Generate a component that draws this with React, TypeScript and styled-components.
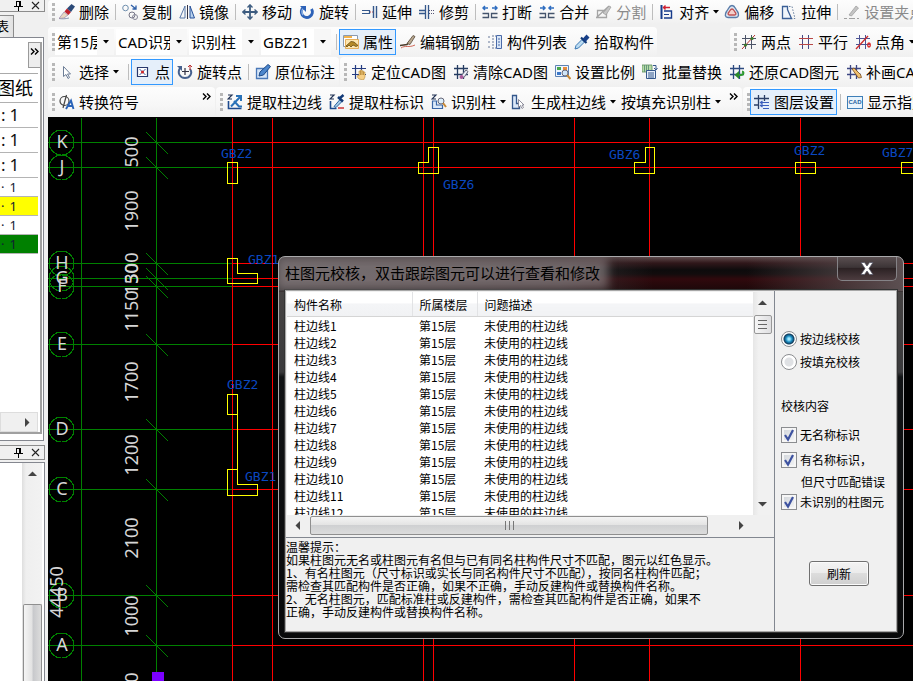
import React from "react";
import styled, { createGlobalStyle, css } from "styled-components";

const GlobalStyle = createGlobalStyle`
  * { box-sizing: border-box; }
  html, body { margin: 0; padding: 0; overflow: hidden; background: #f0f0f0; }
  button, select, input { font: inherit; color: inherit; margin: 0; }
`;

const uiFont = `"Noto Sans", "Noto Sans CJK SC", sans-serif`;
const smallFont = `"Noto Sans CJK SC", sans-serif`;

const Page = styled.div`
  display: flex;
  height: 100vh;
  overflow: hidden;
  background: #f0f0f0;
  color: #000;
  font: 15px/20px ${uiFont};
`;

/* ---------- side panels ---------- */

const Sidebar = styled.aside`
  flex: 0 0 45px;
  display: flex;
  flex-direction: column;
  overflow: hidden;
  margin-right: 3px;
`;

const PanelTitle = styled.header<{ $first?: boolean }>`
  flex: 0 0 ${(p) => (p.$first ? 12 : 15)}px;
  margin-top: ${(p) => (p.$first ? 0 : 4)}px;
  display: flex;
  align-items: center;
  justify-content: flex-end;
  gap: 8px;
  padding-right: 4px;
  border: 1px solid #8c8c8c;
  border-left: 0;
  border-top-width: ${(p) => (p.$first ? 0 : 1)}px;
`;

const TitleButton = styled.button`
  display: flex;
  padding: 0;
  border: 0;
  background: none;
`;

const TabStrip = styled.div`
  flex: 0 0 25px;
  display: flex;
  align-items: flex-end;
`;

const PanelTab = styled.button`
  width: 14px;
  height: 22px;
  padding: 0;
  border: 1px solid #8c8c8c;
  border-left: 0;
  border-bottom: 0;
  background: linear-gradient(90deg, #f0f0f0, #e2e2e2);
  display: flex;
  justify-content: flex-end;
  padding-right: 4px;
  font: 13px/20px ${smallFont};
  overflow: hidden;
`;

const ListPanel = styled.section`
  flex: 0 0 404px;
  display: flex;
  border: 1px solid #84878f;
  border-left: 0;
  background: #fff;
  padding: 4px 1px 6px 0;
  width: 44px;
`;

const ListInner = styled.div`
  flex: 1;
  display: flex;
  flex-direction: column;
  border-right: 2px solid #a0a0a0;
  border-bottom: 2px solid #a0a0a0;
  overflow: hidden;
`;

const MoreBox = styled.button`
  align-self: flex-end;
  flex: 0 0 26px;
  width: 13px;
  margin-right: -1px;
  border: 1px solid #9a9a9a;
  background: #ededed;
  padding: 5px 0 0;
  display: flex;
  justify-content: center;
`;

const ListHeader = styled.div`
  flex: 0 0 30px;
  margin-top: 5px;
  border-top: 1px solid #aaa;
  border-bottom: 1px solid #b0b0b0;
  width: 38px;
  display: flex;
  justify-content: flex-end;
  align-items: center;
  padding-right: 5px;
  white-space: nowrap;
  font-size: 18px;
`;

const ListRow = styled.div<{ $small?: boolean; $bg?: string }>`
  flex: 0 0 ${(p) => (p.$small ? 19 : 25)}px;
  line-height: 18px;
  display: flex;
  align-items: center;
  width: 38px;
  padding-left: 1px;
  border-bottom: 1px solid #b4b4b4;
  background: ${(p) => p.$bg ?? "#fff"};
  color: ${(p) => (p.$small ? "#123" : "#111")};
  font-size: ${(p) => (p.$small ? 13 : 17)}px;
  gap: ${(p) => (p.$small ? 5 : 4)}px;
`;

const HScrollStub = styled.div`
  margin-top: auto;
  flex: 0 0 20px;
  width: 38px;
  border: 1px solid #ddd;
  background: #f0f0f0;
  display: flex;
  align-items: center;
  justify-content: flex-end;
  padding-right: 5px;
`;

const LowerPanel = styled.section`
  flex: 1;
  margin-top: 2px;
  display: flex;
  justify-content: flex-end;
  background: #fff;
  border-top: 1px solid #84878f;
  border-right: 1px solid #84878f;
  padding-right: 2px;
`;

const VScrollTrack = styled.div`
  width: 20px;
  background: linear-gradient(90deg, #dedede, #efefef 20%, #f2f2f2);
  display: flex;
  flex-direction: column;
  align-items: center;
  padding-top: 6px;
  justify-content: space-between;
`;

const VThumb = styled.div`
  width: 19px;
  height: 77px;
  border: 1px solid #8f8f8f;
  border-bottom: 0;
  border-radius: 2px 2px 0 0;
  background: linear-gradient(90deg, #f5f5f5, #e3e3e3 45%, #c8c9cc 55%, #dcdcdc);
`;

/* ---------- toolbars ---------- */

const Main = styled.main`
  flex: 1;
  min-width: 0;
  display: flex;
  flex-direction: column;
`;

const ToolRow = styled.div<{ $top?: boolean }>`
  flex: 0 0 ${(p) => (p.$top ? 27 : 30)}px;
  display: flex;
  overflow: hidden;
  gap: 1px;
`;

const Strip = styled.div<{ $width?: number; $top?: boolean; $left?: number }>`
  flex: ${(p) => (p.$width ? `0 0 ${p.$width}px` : "1 0 auto")};
  margin-left: ${(p) => p.$left ?? 0}px;
  display: flex;
  align-items: center;
  height: ${(p) => (p.$top ? 24 : 30)}px;
  padding-left: 4px;
  border-radius: 4px;
  background: linear-gradient(#fdfdfd, #f7f7f7 60%, #f0f0f0);
`;

const Grip = styled.span`
  flex: 0 0 3px;
  height: 18px;
  background: repeating-linear-gradient(#b8b8b8 0 3px, transparent 3px 5px);
`;

const Tool = styled.button<{ $on?: boolean; $dim?: boolean }>`
  flex: none;
  display: flex;
  align-items: center;
  gap: 4px;
  height: 26px;
  padding: 0 2px 0 3px;
  border: 1px solid transparent;
  background: none;
  white-space: nowrap;
  ${(p) => p.$on && css`
    border-color: #3399ff;
    background: #e5effa;
  `}
  ${(p) => p.$dim && css`color: #8a8a8a;`}
`;

const MenuMark = styled.span`
  display: flex;
  margin-right: -2px;
`;

const Divider = styled.span<{ $lead?: number }>`
  flex: 0 0 1px;
  height: 16px;
  margin: 0 2px 0 ${(p) => p.$lead ?? 3}px;
  background: #bdbdbd;
`;

const ComboWrap = styled.label<{ $width: number }>`
  flex: 0 0 ${(p) => p.$width}px;
  display: grid;
  grid-template-columns: 1fr 17px;
  align-items: center;
  height: 26px;
  background: #fff;
  margin-right: 2px;
`;

const ComboSelect = styled.select`
  grid-column: 1;
  min-width: 0;
  width: 100%;
  height: 26px;
  appearance: none;
  border: 0;
  border-radius: 0;
  padding: 0 0 0 2px;
  background: #fff;
  overflow: hidden;
  white-space: nowrap;
`;

const ComboArrow = styled.span`
  display: flex;
  align-items: center;
  justify-content: center;
  height: 26px;
  background: #f7f7f7;
`;

const Overflow = styled.button`
  align-self: flex-start;
  margin: 6px 4px 0 auto;
  padding: 0;
  border: 0;
  background: none;
  display: flex;
`;

/* ---------- icons ---------- */

const Svg = ({ children, w = 16, h = 16 }: { children: React.ReactNode; w?: number; h?: number }) => (
  <svg width={w} height={h} viewBox={`0 0 ${w} ${h}`} fill="none" aria-hidden="true">
    {children}
  </svg>
);

const Down = () => (
  <Svg w={6} h={4}><path d="M0 0h6L3 3.5z" fill="#000" /></Svg>
);
const Chevrons = () => (
  <Svg w={9} h={7}><path d="M1 .5l3 3-3 3M5 .5l3 3-3 3" stroke="#000" strokeWidth="1.4" /></Svg>
);
const Pin = () => (
  <Svg w={9} h={10}>
    <path d="M2.5 0v5M2 .5h5M0 5.5h9M4.5 6v4" stroke="#000" /><path d="M5 0h2v5H5z" fill="#000" />
  </Svg>
);
const Cross = () => (
  <Svg w={9} h={9}><path d="M1 1l7 7M8 1L1 8" stroke="#222" strokeWidth="1.1" /></Svg>
);
const ArrowTri = ({ dir }: { dir: "up" | "down" | "left" | "right" }) => {
  const d = { up: "M0 7l4.500-4.500L9 7z", down: "M0 2l4.500 4.500L9 2z", left: "M7 0L2.500 4.500 7 9z", right: "M2 0l4.500 4.500L2 9z" }[dir];
  return <Svg w={9} h={9}><path d={d} fill="#444" /></Svg>;
};

const hash = "M4.500 1v14M10.500 1v14M1 4.500h14M1 10.500h14";

const icons: Record<string, React.ReactNode> = {
  erase: <><path d="M0 14.500c3 .5 6 .5 10-.5" stroke="#8a9ab0" /><path d="M5 8l4 3-4 3-5 .5z" fill="#e8d8c0" stroke="#98a" strokeWidth=".7" /><path d="M5.500 7.500l4 3.500 2.500-3-4-3.500z" fill="#c0202a" /><path d="M8 4.500L12.500 0 16 2.500 12 8z" fill="#2b4a78" /></>,
  copy: <><circle cx="3.500" cy="4" r="2.800" stroke="#6f8fae" /><circle cx="10" cy="11" r="3" stroke="#778" /><circle cx="13" cy="13" r="2.500" stroke="#889" /><path d="M9 1l5 4M14 1.500V5h-3.500" stroke="#2e5fa8" strokeWidth="1.300" /></>,
  mirror: <><path d="M6 2v12H.8z" stroke="#5878a8" /><path d="M8.500 1v14" stroke="#334" /><path d="M11 2v12h4.500z" stroke="#27509a" fill="#b8d2ee" /></>,
  move: <><path d="M8 1v14M1 8h14" stroke="#3d5c80" strokeWidth="1.800" /><path d="M5.500 3.500L8 .8l2.500 2.700M5.500 12.500L8 15.200l2.500-2.700M3.500 5.500L.8 8l2.700 2.500M12.500 5.500L15.200 8l-2.700 2.500" stroke="#3d5c80" strokeWidth="1.300" /></>,
  rotate: <><path d="M4.500 3.500A5.500 5.500 0 1 0 12.500 5" stroke="#2d62b8" strokeWidth="3" /><path d="M5 3.500A5.500 5.500 0 0 0 4 11" stroke="#8fb4e6" strokeWidth="1.500" /><path d="M1 2h6v6z" fill="#2d62b8" /></>,
  extend: <><path d="M0 6.500h7.500v3H0" stroke="#35588c" strokeWidth="1.200" /><path d="M8 8h3" stroke="#c04848" strokeDasharray="1 1" /><path d="M11.500 2v12M14.500 2v12" stroke="#35588c" strokeWidth="1.400" /></>,
  trim: <><path d="M0 6.500h6M0 9.500h6" stroke="#35588c" strokeWidth="1.300" /><path d="M6.500 1v14M9.500 1v14" stroke="#35588c" strokeWidth="1.300" /><path d="M10 6.500h6M10 9.500h6" stroke="#557" strokeDasharray="1 1" /></>,
  breaks: <><path d="M1 4h5M10 4h5M3 2L1 4l2 2M13 2l2 2-2 2" stroke="#2e6dc0" strokeWidth="1.500" /><path d="M.5 9.500h6v4h-6M15.500 9.500h-6v4h6" stroke="#44546c" strokeWidth="1.300" /></>,
  merge: <><path d="M1 4h5M10 4h5M4 2l2 2-2 2M12 2l-2 2 2 2" stroke="#2e6dc0" strokeWidth="1.500" /><path d="M.5 9.500h6v4h-6M15.500 9.500h-6v4h6" stroke="#44546c" strokeWidth="1.300" /></>,
  split: <><path d="M1.500 6.500h9v7h-9zM0 14L13 2" stroke="#a5a5a5" strokeWidth="1.300" /><path d="M7 9l6-7 2 1-5 8z" fill="#c6c6c6" stroke="#999" strokeWidth=".7" /></>,
  align: <><path d="M2.500 1v14" stroke="#173b8a" strokeWidth="2" /><path d="M5 7h7.500v7H5" stroke="#173b8a" strokeWidth="1.400" /><path d="M5 10.500h5" stroke="#173b8a" /><path d="M11 3.500H4M6.500 1.500l-2 2 2 2" stroke="#d02030" strokeWidth="1.400" /></>,
  offset: <><path d="M8 1.500c3 0 3 3 5.500 6 2 3 1 6-1.500 6H4c-3 0-3.500-3-1.500-6C5 4.500 5 1.500 8 1.500z" fill="#dce8f4" stroke="#5a7ca8" strokeWidth="1.400" /><path d="M8 5c1.500 0 1.500 1 3 3 1.500 1.500 1 3-.5 3h-5C4 11 3.500 9.500 5 8c1.500-2 1.500-3 3-3z" fill="#f4d0cc" stroke="#c05050" strokeWidth="1.400" /></>,
  stretch: <><path d="M1.500 14.500v-12h5v3l4 9z" stroke="#3b5f96" strokeWidth="1.300" fill="#f0f5fb" /><path d="M8 2.500h3l3 12h-3" stroke="#68809f" strokeDasharray="1.500 1.500" /></>,
  grip: <><path d="M0 14.500h3M5 14.500h6M13 14.500h2" stroke="#a0a0a0" /><path d="M5 11l7-9 2.500 2-7 8z" fill="#c4c4c4" stroke="#999" strokeWidth=".7" /></>,
  property: <><path d="M.5 1.500h14v11H.5z" fill="#fff" stroke="#8a9ab0" /><path d="M1 2h8v2H1z" fill="#f3b24a" /><path d="M2.500 5.500h13v9h-13z" fill="#fde6b0" stroke="#e0a040" strokeWidth=".8" /><path d="M3 12l5-4.500 3 .5 4 3.500-2 1-3-1.500-2 2-2-2-2 2z" fill="#b58a28" stroke="#6a4c12" strokeWidth=".8" /></>,
  rebar: <><path d="M1 14c4-3 8 0 14-3" stroke="#d06858" /><path d="M0 11.500l7-1 7-8" stroke="#4a3c2c" strokeWidth="1.500" /><path d="M7 9.500l6-8 2 1-5 8z" fill="#b9a890" stroke="#4a3c2c" strokeWidth=".7" /></>,
  list: <><path d="M1 3h2M1 8h2M1 13h2M5 2h4M5 5h3M5 8h3M5 11h3M5 14h4" stroke="#67789a" strokeDasharray="2 1" /><path d="M9.500 1.500h5v13h-5z" fill="#d9e6f6" stroke="#4a6aa8" /><path d="M11 5h2M11 8h2M11 11h2" stroke="#4a6aa8" /></>,
  picker: <><path d="M1 15l1-3.500 6-6 2.500 2.500-6 6z" fill="#bcdcf2" stroke="#3b78b4" /><path d="M7 3.500l5.500 5.500" stroke="#123a78" strokeWidth="2.200" /><path d="M8.500 5L12.500.5 15.500 3.500 11.500 8z" fill="#173f88" /></>,
  twoPoint: <><path d={hash} stroke="#4c5468" /><path d="M1 15L14 1" stroke="#bb3030" /><circle cx="4.500" cy="11" r="1.600" fill="#3a7a2a" /><circle cx="11" cy="4.500" r="1.600" fill="#3a7a2a" /></>,
  parallel: <><path d={hash} stroke="#454a86" /><path d="M1 4.500h14M1 10.500h14" stroke="#b84848" /></>,
  angle: <><path d={hash} stroke="#4c5494" /><path d="M1 15L13 2" stroke="#cc2a2a" strokeWidth="1.300" /><ellipse cx="14" cy="11" rx="1.300" ry="2" stroke="#d22" strokeWidth="1.300" /></>,
  pointer: <path d="M4.500 2.500v10l2.500-2 2 4 1.500-1-2-3.500h3z" fill="#fff" stroke="#6c7d96" />,
  point: <><path d="M2.500 3.500h10v9h-10z" fill="#fff" stroke="#28386c" strokeWidth="1.200" /><path d="M4.500 5l6 6M10.500 5l-6 6" stroke="#3c5c9c" /><circle cx="7.500" cy="8" r="1.600" fill="#d22a2a" /></>,
  rotatePoint: <><path d="M3 4C0 9 3 14 8 14s8-5 5-9" stroke="#46618e" strokeWidth="2" /><path d="M0 2h5v5z" fill="#46618e" /><path d="M8 4v7M5 7.500h7" stroke="#334" strokeWidth="1.200" /><path d="M13 1v5M11 3l2-2 2 2" stroke="#b33" /></>,
  note: <><path d="M1.500 4.500h11v10h-11z" fill="#d5e5f8" stroke="#4a78b8" strokeWidth="1.300" /><path d="M4 12l1-4 8-7.500 2.500 2-7 8.500z" fill="#4c86cc" stroke="#1d4a88" /></>,
  locate: <><path d={hash} stroke="#253c82" strokeWidth="1.200" /><path d="M8 15c-2-2-2-3-1-4l1 1V7h1.500v4-5H11v5-4h1.500v4-3H14v5l-1.500 3z" fill="#f6cf86" stroke="#b98a38" strokeWidth=".6" /></>,
  clear: <><path d={hash} stroke="#253c62" strokeWidth="1.300" /><path d="M8 12l5-6 2 1.500-4 6z" fill="#e9eef8" stroke="#667" /><circle cx="8.500" cy="13" r="2" fill="#a85a9a" /></>,
  scale: <><path d="M.5 1.500h13v11H.5z" fill="#eef5ff" stroke="#5d82b4" /><path d="M2 3h4v3H2z" fill="#49a84b" /><path d="M8 3h4v3H8z" fill="#e88b3c" /><path d="M2 8h4v3H2z" fill="#3c78c8" /><circle cx="10" cy="9" r="3" fill="#cfe5f8" stroke="#667" /><path d="M12 11l3.500 4" stroke="#c88a38" strokeWidth="2" /></>,
  batch: <><path d="M0 1h10v7H0z" fill="#b8dca8" stroke="#5a8a5a" strokeWidth=".8" /><path d="M2.500 1v7M4.500 1v7M6.500 1v7" stroke="#66997a" /><path d="M4.500 6.500h9v8h-9z" fill="#e9f1fc" stroke="#35588c" /><path d="M7 8v6M9 8v6M11 8v6" stroke="#35588c" /><path d="M11 1.500h3v4M12 4l2 2 1.500-2" stroke="#35588c" /></>,
  restore: <><path d={hash} stroke="#2c4a80" strokeWidth="1.300" /><path d="M9 11h3c3 0 3-3 1-3.500" stroke="#2f9a2f" strokeWidth="2" /><path d="M5.500 11l4.500-4v8z" fill="#2c8a2c" /></>,
  redraw: <><path d={hash} stroke="#3c4682" strokeWidth="1.300" /><path d="M6 5l6.500 9 3-.5-1-3L8 4z" fill="#f0c070" stroke="#7a4c1c" strokeWidth=".8" /></>,
  convert: <><ellipse cx="5.500" cy="7" rx="4.500" ry="4.500" stroke="#444" strokeWidth="1.200" /><path d="M7.500 1L4 14" stroke="#444" strokeWidth="1.200" /><path d="M7 15l5-8.500 2.500 8.500M9.500 12h4" stroke="#2a63b8" strokeWidth="1.900" /></>,
  pickLine: <><path d="M1 1h4L1 5h4" stroke="#235" strokeWidth="1.200" /><path d="M1.500 7v7.500h13" stroke="#1e4a8e" strokeWidth="1.600" /><path d="M4 12.500L13.500 2.500M9 2h5v5M7 7l5 5.500h3" stroke="#2a72b8" strokeWidth="2" /></>,
  pickMark: <><path d="M1 1h4L1 5h4" stroke="#235" strokeWidth="1.200" /><path d="M1.500 7v7.500h6" stroke="#1e4a8e" strokeWidth="1.600" /><path d="M5 12.500l6-7 2 2-6 6z" fill="#a8cce8" stroke="#2a62a0" /><path d="M9 3l5 4.500M11 4l3.500-3" stroke="#123a78" strokeWidth="2.500" /><path d="M9 14h6" stroke="#c33" strokeWidth="1.500" /></>,
  recognise: <><path d="M1 1h4L1 5h4" stroke="#235" strokeWidth="1.100" /><path d="M1.500 7h4v4h6v3.500h-10z" stroke="#3a67a8" strokeWidth="1.200" fill="#dceafa" /><circle cx="10" cy="7" r="3" fill="#dceefa" stroke="#667" /><path d="M12 9l3 4" stroke="#c88a38" strokeWidth="2" /></>,
  generate: <><path d="M1.500 1.500h4v8h3v5h-7z" fill="#dbe8f8" stroke="#35588c" strokeWidth="1.300" /><path d="M7.500 5.500v8l2-2 1.500 3 1.500-1-1.500-2.500H13z" fill="#fff" stroke="#778" strokeWidth=".8" /></>,
  layers: <><path d="M4.500 1v14M10.500 1v6M0 4.500h15M0 11h5" stroke="#2b3f66" strokeWidth="1.300" /><path d="M7 8.500h8M7 11.500h8M9 14.500h6M8.500 7l-2 1.500 2 1.500M8.500 10l-2 1.500 2 1.500" stroke="#3b5fbd" strokeWidth="1.200" /></>,
};

const Icon = ({ name }: { name: string }) => <Svg>{icons[name]}</Svg>;

const CadBadge = styled.span`
  width: 16px;
  height: 13px;
  border: 1px solid #3e7fb8;
  background: #e9f4fc;
  color: #1d5f9e;
  font: bold 6px/11px "Liberation Sans", sans-serif;
  text-align: center;
`;

type ToolDef = { icon?: string; text: string; on?: boolean; dim?: boolean; menu?: boolean; cad?: boolean };

const T = ({ icon, text, on, dim, menu, cad }: ToolDef) => (
  <Tool $on={on} $dim={dim} aria-pressed={on}>
    {icon && <Icon name={icon} />}
    {cad && <CadBadge>CAD</CadBadge>}
    <span>{text}</span>
    {menu && <MenuMark><Down /></MenuMark>}
  </Tool>
);

const Combo = ({ value, width, label }: { value: string; width: number; label: string }) => (
  <ComboWrap $width={width}>
    <ComboSelect aria-label={label} defaultValue={value}><option>{value}</option></ComboSelect>
    <ComboArrow><Down /></ComboArrow>
  </ComboWrap>
);

/* ---------- drawing ---------- */

const Workspace = styled.div`
  position: relative;
  flex: 1;
  overflow: hidden;
  background: #000;
`;

const Drawing = styled.svg`
  display: block;
  width: 100%;
  height: 100%;
`;

const axes = [
  { id: "K", y: 25 }, { id: "J", y: 50 }, { id: "H", y: 146 }, { id: "G", y: 161 }, { id: "F", y: 169 },
  { id: "E", y: 227 }, { id: "D", y: 312 }, { id: "C", y: 372 }, { id: "B", y: 478 }, { id: "A", y: 528 },
];
const columnsX = [184, 224, 375, 385, 526, 601, 752];
const dims: [string, number, number][] = [
  ["500", 83, 35], ["1900", 83, 94], ["300", 83, 151], ["150", 83, 162], ["1150", 83, 194], ["1700", 83, 265],
  ["1200", 83, 338], ["2100", 83, 421], ["1000", 83, 499], ["3000", 83, 576], ["44450", 8, 475],
];
const tags: [string, number, number][] = [
  ["GBZ2", 173, 41], ["GBZ1", 200, 147], ["GBZ2", 179, 272], ["GBZ1", 197, 364],
  ["GBZ6", 395, 72], ["GBZ6", 561, 42], ["GBZ2", 746, 38], ["GBZ7", 834, 40],
];
const shapes = [
  "M179 45h10v21h-10z",
  "M179 141h10v15h20v10h-30z",
  "M179 277h10v20h-10zM189 277v90h20v11h-30v-26h10",
  "M380 30h10v26h-20v-11h10z",
  "M597 30h9v26h-20v-11h11z",
  "M747 45h20v11h-20z",
  "M853 45h30v11h-30z",
];

const Plan = () => (
  <Drawing role="img" aria-label="柱平面图">
    <g transform="translate(.5 .5)" shapeRendering="crispEdges" fill="none">
      <path d="M33 0V2000M108 0V2000" stroke="#008000" />
      {axes.map((a) => (
        <g key={a.id}>
          <path d={`M0 ${a.y}H184`} stroke="#008000" />
          <path d={`M184 ${a.y}H4000`} stroke="#f00" />
          <path d={`M98 ${a.y - 10}l22 22`} stroke="#008000" />
          <circle cx="13" cy={a.y} r="12.500" stroke="#008000" />
        </g>
      ))}
      {columnsX.map((x) => <path key={x} d={`M${x} 0V2000`} stroke="#f00" />)}
      {shapes.map((d) => <path key={d} d={d} stroke="#ff0" />)}
      <path d="M103 554h12v20h-12z" fill="#7b00ff" />
    </g>
    <g fontFamily={`"Noto Sans", sans-serif`} fontSize="18" fill="#d6d6d6" textAnchor="middle">
      {axes.map((a) => <text key={a.id} x="14" y={a.y + 6}>{a.id}</text>)}
      {dims.map(([t, x, y]) => (
        <text key={t} transform={`translate(${x + 7} ${y}) rotate(-90)`}>{t}</text>
      ))}
    </g>
    <g fontFamily={`"DejaVu Sans Mono", monospace`} fontSize="13" fill="#0a48c0">
      {tags.map(([t, x, y]) => <text key={`${x}-${y}`} x={x} y={y}>{t}</text>)}
    </g>
  </Drawing>
);

/* ---------- dialog ---------- */

const Dialog = styled.section`
  position: absolute;
  left: 230px;
  top: 139px;
  width: 626px;
  padding: 0 6px 6px;
  border: 1px solid #a9a9ab;
  border-radius: 7px;
  background:
    linear-gradient(90deg, rgba(74, 70, 72, 0.9), rgba(64, 58, 60, 0.7) 45%, rgba(20, 8, 10, 0) 60%, rgba(60, 45, 48, 0) 75%, #5c5052) 0 0 / 100% 34px no-repeat,
    linear-gradient(#5e4a4c, #30171a 6px, #0d0b0c 13px, #120c0d 17px, #30090d 22px, #1c0809 33px, #464343 35px, #3a3a3c 115px, #111315 120px, #08090a);
  font: 12px/17px ${smallFont};
`;

const DialogBar = styled.header`
  display: flex;
  justify-content: space-between;
  height: 33px;
`;

const DialogTitle = styled.h1`
  margin: 9px 0 0;
  height: 15px;
  font: 15px/15px ${uiFont};
  white-space: nowrap;
  color: #000;
  background: rgba(150, 140, 142, 0.6);
  box-shadow: 0 0 10px 8px rgba(150, 140, 142, 0.6);
  clip-path: inset(-9px -24px -9px -6px);
`;

const CloseButton = styled.button`
  width: 60px;
  height: 24px;
  padding: 0;
  border: 1px solid #858387;
  border-top: 0;
  border-radius: 0 0 5px 5px;
  background: linear-gradient(#5a4f51, #3c3436 45%, #2c2224 50%, #4c3c3f);
  display: flex;
  align-items: center;
  justify-content: center;
`;

const DialogBody = styled.div`
  display: flex;
  border: 1px solid #a7a7a7;
  outline: 1px solid #333;
  background: #f0f0f0;
  color: #000;
`;

const Left = styled.div`
  flex: 1;
  min-width: 0;
  border-right: 1px solid #828790;
`;

const ListView = styled.div`
  display: grid;
  grid-template-columns: 1fr 19px;
  grid-template-rows: 223px 21px;
  border-bottom: 1px solid #828790;
  padding: 1px 2px 1px 1px;
  background: #f0f0f0;
`;

const TableArea = styled.div`
  overflow: hidden;
  background: #fff;
`;

const Table = styled.table`
  width: 100%;
  table-layout: fixed;
  border-collapse: collapse;
  th, td { padding: 0 0 0 7px; text-align: left; font-weight: 400; height: 17px; white-space: nowrap; }
  th { height: 24px; padding-top: 2px; border-bottom: 1px solid #d5d5d5; border-right: 1px solid #e2e3e5; background: linear-gradient(#fff 45%, #f4f5f7 50%, #f1f2f4); }
  th:last-child { border-right: 0; }
`;

const VScroll = styled.div`
  display: flex;
  flex-direction: column;
  align-items: center;
  padding: 6px 0;
  background: linear-gradient(90deg, #e6e6e6, #f1f1f1 30%);
`;

const VGrip = styled.div`
  width: 18px;
  height: 19px;
  margin: 8px 0 auto;
  border: 1px solid #989898;
  border-radius: 2px;
  background: linear-gradient(90deg, #f6f6f6, #dfdfe1);
  display: flex;
  align-items: center;
  justify-content: center;
`;

const HScroll = styled.div`
  display: flex;
  align-items: center;
  padding: 0 7px 1px 6px;
  gap: 8px;
`;

const HGrip = styled.div`
  flex: 0 0 398px;
  height: 19px;
  margin-right: auto;
  border: 1px solid #8f8f8f;
  border-radius: 2px;
  background: linear-gradient(#f4f4f4, #e4e4e4 45%, #cfd0d2 50%, #dcdcdc);
  display: flex;
  align-items: center;
  justify-content: center;
`;

const Tips = styled.p`
  margin: 0;
  padding: 2px 0 13px;
  line-height: 13px;
  white-space: nowrap;
`;

const Options = styled.form`
  flex: 0 0 121px;
  display: flex;
  flex-direction: column;
  padding: 36px 0 0 6px;
`;

const Option = styled.label<{ $gap?: number }>`
  display: flex;
  align-items: center;
  gap: 3px;
  height: 23px;
  margin-bottom: ${(p) => p.$gap ?? 0}px;
  white-space: nowrap;
`;

const Radio = styled.input`
  appearance: none;
  width: 16px;
  height: 16px;
  border: 1px solid #8b8d90;
  border-radius: 50%;
  background: radial-gradient(circle, #dfe1e4 0 4px, #fff 5px);
  &:checked { background: radial-gradient(circle at 50% 50%, #9fe8ff 0 1px, #1d8fc4 3px, #123c5c 5px, #fff 6px); }
`;

const Check = styled.span`
  display: grid;
  width: 16px;
  height: 16px;
  input { grid-area: 1 / 1; appearance: none; width: 16px; height: 16px; border: 1px solid #8b8d90; background: linear-gradient(135deg, #cfd3d8, #f6f7f8); box-shadow: inset 0 0 0 2px #f6f6f6; }
  svg { grid-area: 1 / 1; pointer-events: none; visibility: hidden; }
  input:checked + svg { visibility: visible; }
`;

const GroupLabel = styled.div<{ $indent?: boolean }>`
  padding: ${(p) => (p.$indent ? "0 0 0 20px" : "24px 0 9px")};
  white-space: nowrap;
`;

const Refresh = styled.button`
  width: 60px;
  height: 25px;
  margin: 48px 0 0 28px;
  padding: 0;
  border: 1px solid #707070;
  border-radius: 3px;
  background: linear-gradient(#f3f3f3, #ebebeb 49%, #dddddd 50%, #cfcfcf);
  box-shadow: inset 0 0 0 1px #fbfbfb;
`;

const CheckOption = ({ text, gap }: { text: string; gap?: number }) => (
  <Option $gap={gap}>
    <Check>
      <input type="checkbox" defaultChecked />
      <Svg><path d="M4 8l3 4.500L12 3" stroke="#3d52a0" strokeWidth="2.200" /></Svg>
    </Check>
    {text}
  </Option>
);

const CheckDialog = () => (
  <Dialog role="dialog" aria-labelledby="check-title">
    <DialogBar>
      <DialogTitle id="check-title">柱图元校核，双击跟踪图元可以进行查看和修改</DialogTitle>
      <CloseButton aria-label="关闭">
        <Svg w={16} h={13}>
          <path d="M2 .500h3.500L8 4 10.500.500H14L10 6.500l4 6h-3.500L8 9l-2.500 3.500H2l4-6z" fill="#fff" stroke="#556" strokeWidth=".8" />
        </Svg>
      </CloseButton>
    </DialogBar>
    <DialogBody>
      <Left>
        <ListView>
          <TableArea>
            <Table>
              <colgroup><col width="125" /><col width="65" /><col /></colgroup>
              <thead><tr><th>构件名称</th><th>所属楼层</th><th>问题描述</th></tr></thead>
              <tbody>
                {Array.from({ length: 12 }, (_, i) => (
                  <tr key={i}><td>{`柱边线${i + 1}`}</td><td>第15层</td><td>未使用的柱边线</td></tr>
                ))}
              </tbody>
            </Table>
          </TableArea>
          <VScroll>
            <ArrowTri dir="up" />
            <VGrip><Svg w={9} h={11}><path d="M0 1.500h9M0 5.500h9M0 9.500h9" stroke="#666" /></Svg></VGrip>
            <ArrowTri dir="down" />
          </VScroll>
          <HScroll>
            <ArrowTri dir="left" />
            <HGrip><Svg w={11} h={9}><path d="M1.500 0v9M5.500 0v9M9.500 0v9" stroke="#777" /></Svg></HGrip>
            <ArrowTri dir="right" />
          </HScroll>
        </ListView>
        <Tips>
          温馨提示：<br />
          如果柱图元无名或柱图元有名但与已有同名柱构件尺寸不匹配，图元以红色显示。<br />
          1、有名柱图元（尺寸标识或实长与同名构件尺寸不匹配），按同名柱构件匹配；<br />
          需检查其匹配构件是否正确，如果不正确，手动反建构件或替换构件名称。<br />
          2、无名柱图元，匹配标准柱或反建构件，需检查其匹配构件是否正确，如果不<br />
          正确，手动反建构件或替换构件名称。
        </Tips>
      </Left>
      <Options onSubmit={(e) => e.preventDefault()}>
        <Option><Radio type="radio" name="mode" defaultChecked />按边线校核</Option>
        <Option><Radio type="radio" name="mode" />按填充校核</Option>
        <GroupLabel>校核内容</GroupLabel>
        <CheckOption text="无名称标识" gap={2} />
        <CheckOption text="有名称标识，" gap={2} />
        <GroupLabel $indent>但尺寸匹配错误</GroupLabel>
        <CheckOption text="未识别的柱图元" />
        <Refresh type="submit">刷新</Refresh>
      </Options>
    </DialogBody>
  </Dialog>
);

/* ---------- page ---------- */

const PanelButtons = () => (
  <>
    <TitleButton aria-label="固定"><Pin /></TitleButton>
    <TitleButton aria-label="关闭"><Cross /></TitleButton>
  </>
);

export default function App() {
  return (
    <Page>
      <GlobalStyle />
      <Sidebar>
        <PanelTitle $first><PanelButtons /></PanelTitle>
        <TabStrip><PanelTab>表</PanelTab></TabStrip>
        <ListPanel>
          <ListInner>
            <MoreBox aria-label="更多"><Chevrons /></MoreBox>
            <ListHeader>图纸</ListHeader>
            <ListRow><span>:</span><span>1</span></ListRow>
            <ListRow><span>:</span><span>1</span></ListRow>
            <ListRow><span>:</span><span>1</span></ListRow>
            <ListRow $small><span>·</span><span>1</span></ListRow>
            <ListRow $small $bg="#ff0"><span>·</span><span>1</span></ListRow>
            <ListRow $small><span>·</span><span>1</span></ListRow>
            <ListRow $small $bg="#008000"><span>·</span><span>1</span></ListRow>
            <HScrollStub><ArrowTri dir="right" /></HScrollStub>
          </ListInner>
        </ListPanel>
        <PanelTitle><PanelButtons /></PanelTitle>
        <LowerPanel>
          <VScrollTrack><ArrowTri dir="up" /><VThumb /></VScrollTrack>
        </LowerPanel>
      </Sidebar>
      <Main>
        <ToolRow $top>
          <Strip $top>
            <Grip />
            <T icon="erase" text="删除" />
            <Divider />
            <T icon="copy" text="复制" />
            <T icon="mirror" text="镜像" />
            <Divider />
            <T icon="move" text="移动" />
            <T icon="rotate" text="旋转" />
            <Divider />
            <T icon="extend" text="延伸" />
            <T icon="trim" text="修剪" />
            <Divider />
            <T icon="breaks" text="打断" />
            <T icon="merge" text="合并" />
            <T icon="split" text="分割" dim />
            <Divider />
            <T icon="align" text="对齐" menu />
            <T icon="offset" text="偏移" />
            <T icon="stretch" text="拉伸" />
            <Divider />
            <T icon="grip" text="设置夹点" dim />
          </Strip>
        </ToolRow>
        <ToolRow>
          <Strip $width={609}>
            <Grip />
            <Combo label="楼层" value="第15层" width={59} />
            <Combo label="模式" value="CAD识别" width={71} />
            <Combo label="构件类型" value="识别柱" width={70} />
            <Combo label="构件" value="GBZ21" width={70} />
            <Divider />
            <T icon="property" text="属性" on />
            <T icon="rebar" text="编辑钢筋" />
            <T icon="list" text="构件列表" />
            <T icon="picker" text="拾取构件" />
          </Strip>
          <Strip $left={72}>
            <Grip />
            <T icon="twoPoint" text="两点" />
            <T icon="parallel" text="平行" />
            <T icon="angle" text="点角" menu />
          </Strip>
        </ToolRow>
        <ToolRow>
          <Strip $width={291}>
            <Grip />
            <T icon="pointer" text="选择" menu />
            <Divider $lead={8} />
            <T icon="point" text="点" on />
            <T icon="rotatePoint" text="旋转点" />
            <Divider />
            <T icon="note" text="原位标注" />
          </Strip>
          <Strip>
            <Grip />
            <T icon="locate" text="定位CAD图" />
            <T icon="clear" text="清除CAD图" />
            <T icon="scale" text="设置比例" />
            <T icon="batch" text="批量替换" />
            <T icon="restore" text="还原CAD图元" />
            <T icon="redraw" text="补画CAD线" />
          </Strip>
        </ToolRow>
        <ToolRow>
          <Strip $width={167}>
            <Grip />
            <T icon="convert" text="转换符号" />
            <Overflow aria-label="更多工具"><Chevrons /></Overflow>
          </Strip>
          <Strip $width={526}>
            <Grip />
            <T icon="pickLine" text="提取柱边线" />
            <T icon="pickMark" text="提取柱标识" />
            <T icon="recognise" text="识别柱" menu />
            <T icon="generate" text="生成柱边线" menu />
            <T text="按填充识别柱" menu />
            <Overflow aria-label="更多工具"><Chevrons /></Overflow>
          </Strip>
          <Strip>
            <Grip />
            <T icon="layers" text="图层设置" on />
            <Divider />
            <T cad text="显示指定图层" />
          </Strip>
        </ToolRow>
        <Workspace>
          <Plan />
          <CheckDialog />
        </Workspace>
      </Main>
    </Page>
  );
}
